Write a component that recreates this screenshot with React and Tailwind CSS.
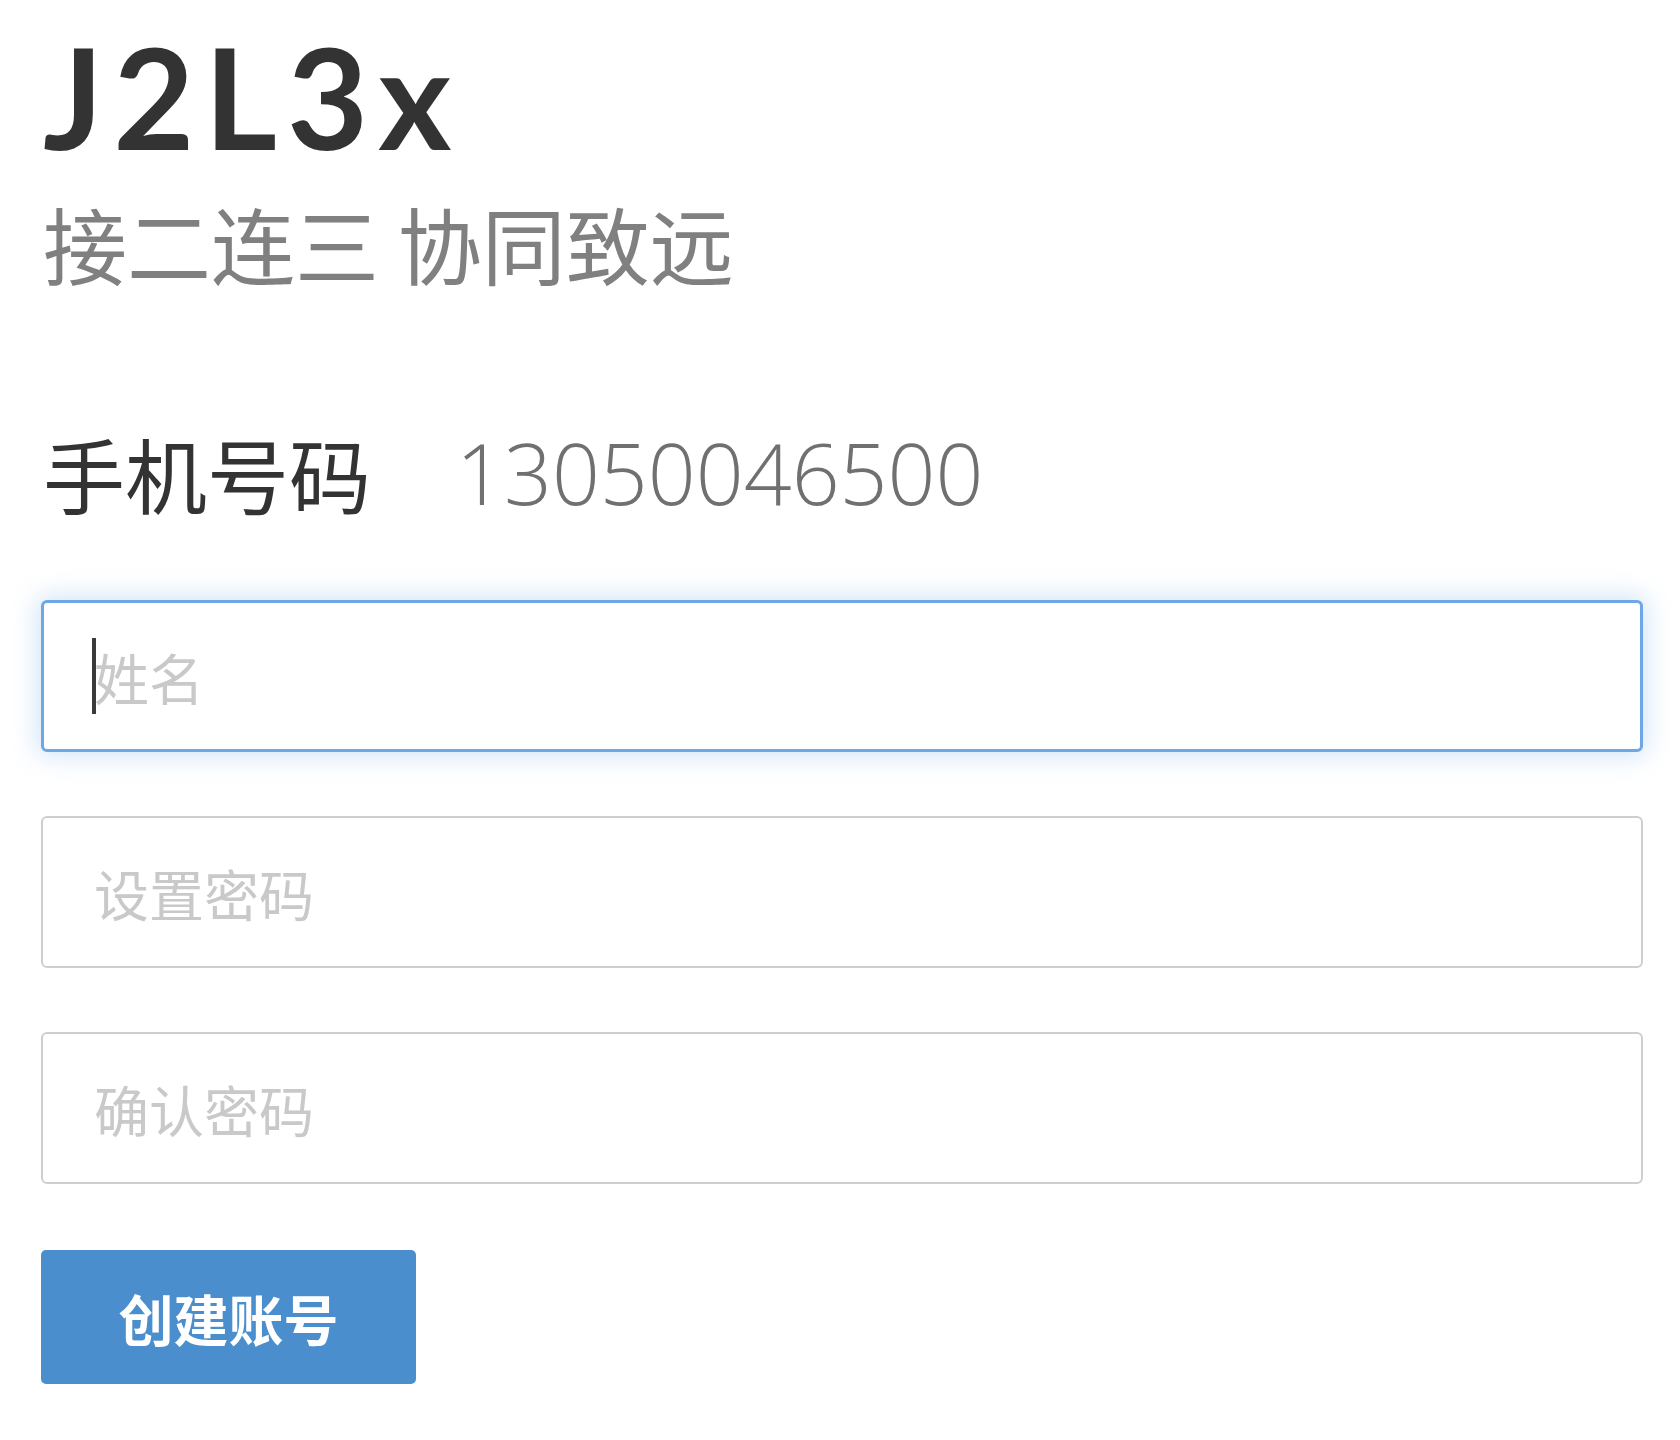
import React from "react";

const cjk = "font-['Noto_Sans_CJK_SC',sans-serif]";

const Field = ({ placeholder, type = "text", focused }) => (
  <div className="relative">
    <input
      type={type}
      placeholder={placeholder}
      className={`block w-full h-[152px] rounded-[6px] bg-white pr-6 text-[55px] leading-none text-[#333] outline-none placeholder:text-[#c9c9c9] ${cjk} ${
        focused
          ? "border-[3px] border-[#6fa6e6] pl-[50px] shadow-[0_0_24px_4px_rgba(102,168,233,0.3)]"
          : "border-2 border-[#cfcfcf] pl-[51px]"
      }`}
    />
    {focused && (
      <span className="pointer-events-none absolute left-[51px] top-[38px] h-[76px] w-[4px] bg-[#3a3a3a]" />
    )}
  </div>
);

export default function App() {
  return (
    <div className="min-h-[1440px] bg-white pl-[41px] pr-[37px] pt-[26px]">
      <h1 className="font-['Lato',sans-serif] text-[140px] font-bold leading-none tracking-[10px] text-[#333] pl-[2px]">
        J2L3x
      </h1>
      <p className={`${cjk} mt-[35px] text-[84px] leading-none text-[#808080] pl-[2px]`}>
        接二连三 协同致远
      </p>

      <div className="mt-[146px] flex items-center pl-[2px]">
        <span className={`${cjk} text-[82px] leading-none text-[#333]`}>手机号码</span>
        <span className="ml-[85px] font-['Open_Sans',sans-serif] text-[84px] font-light leading-none text-[#707070]">
          13050046500
        </span>
      </div>

      <form className="mt-[85px] flex flex-col gap-[64px]">
        <Field placeholder="姓名" focused />
        <Field placeholder="设置密码" type="password" />
        <Field placeholder="确认密码" type="password" />
        <div className="mt-[2px]">
          <button
            type="button"
            className={`${cjk} h-[134px] w-[375px] rounded-[5px] bg-[#4a8ecd] text-[55px] font-bold leading-none text-white`}
          >
            创建账号
          </button>
        </div>
      </form>
    </div>
  );
}
